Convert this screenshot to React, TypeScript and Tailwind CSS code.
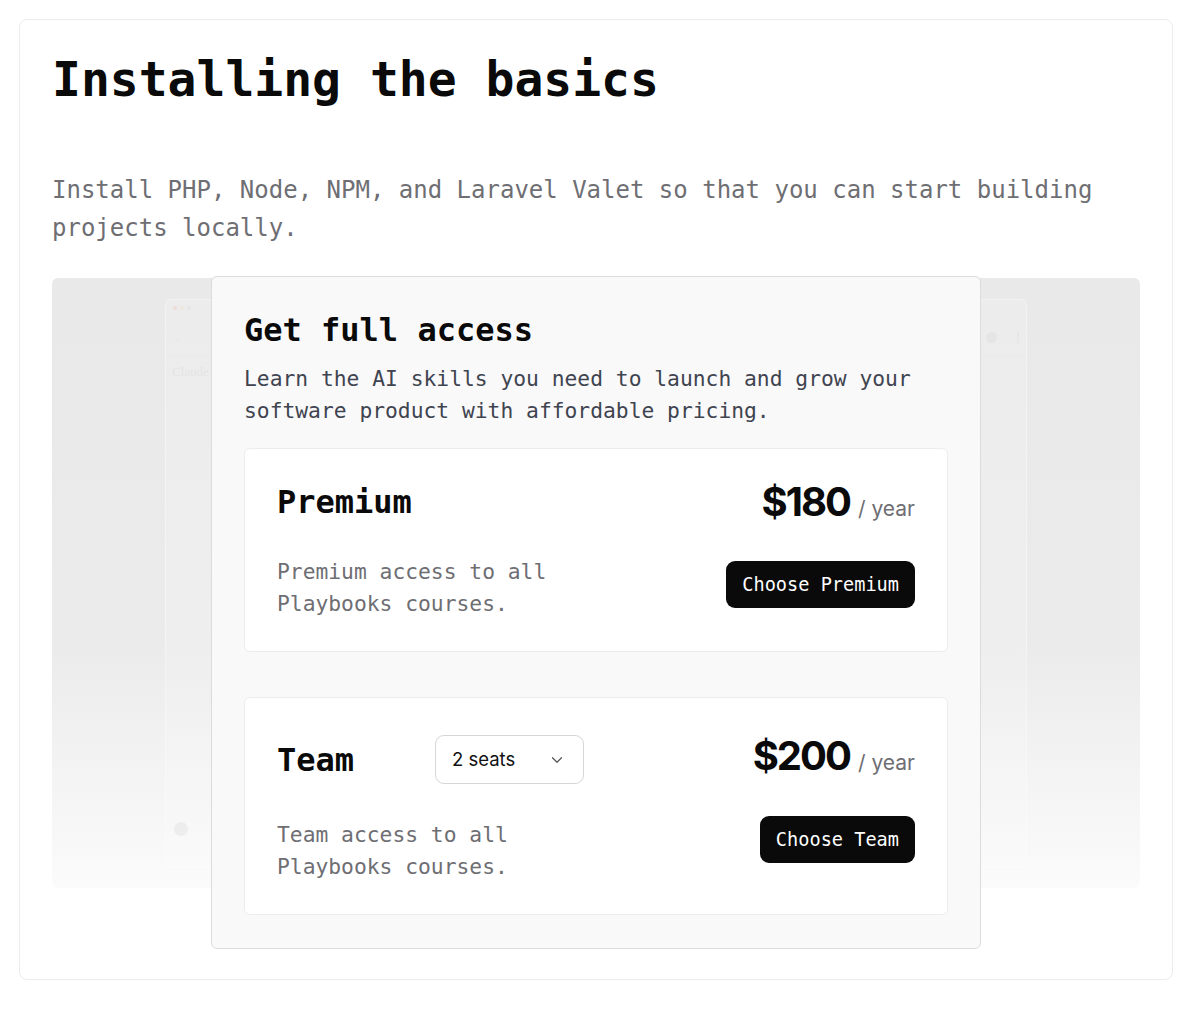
import { ChevronDown } from "lucide-react";

type Plan = {
  name: string;
  price: string;
  blurb: string;
  cta: string;
  seats?: boolean;
};

const mono = "font-['DejaVu_Sans_Mono',monospace]";

function PriceTag({ price, className = "" }: { price: string; className?: string }) {
  return (
    <div className={`flex items-baseline leading-[40px] ${className}`}>
      <span className="font-['Inter',sans-serif] text-[40px] leading-[40px] font-bold tracking-[-0.05em] text-[#0a0a0a]">
        {price}
      </span>
      <span className="ml-2 font-['Inter',sans-serif] text-[21px] leading-none text-[#6e6e73]">/ year</span>
    </div>
  );
}

function PlanCard({ plan }: { plan: Plan }) {
  return (
    <div
      className={`rounded-md border border-[#ededed] bg-white px-[32px] pb-[31px] ${
        plan.seats ? "pt-[37px]" : "pt-[33px]"
      }`}
    >
      <div className="flex items-center">
        <h3
          className={`${mono} text-[32px] leading-[40px] font-bold text-[#0a0a0a] ${plan.seats ? "w-[158px]" : ""}`}
        >
          {plan.name}
        </h3>
        {plan.seats ? (
          <button className="flex h-[49px] w-[149px] items-center justify-between rounded-[9px] border border-[#d6d6d6] bg-white pr-[17px] pl-[16px] font-['Inter',sans-serif] text-[18.5px] text-[#111]">
            2 seats
            <ChevronDown size={18} strokeWidth={1.6} className="text-[#555]" />
          </button>
        ) : null}
        <PriceTag price={plan.price} className={`ml-auto ${plan.seats ? "mb-[8px]" : ""}`} />
      </div>
      <div className={`flex items-start justify-between ${plan.seats ? "mt-[35px]" : "mt-[34px]"}`}>
        <p className={`${mono} max-w-[320px] text-[21.3px] leading-[32px] text-[#6e6e73]`}>{plan.blurb}</p>
        <button
          className={`${mono} h-[47px] rounded-[9px] bg-[#0a0a0a] px-[16px] text-[18.6px] text-white ${
            plan.seats ? "-mt-[3px]" : "mt-[5px]"
          }`}
        >
          {plan.cta}
        </button>
      </div>
    </div>
  );
}

// blurred app screenshot sitting behind the paywall
function ScreenshotBackdrop() {
  return (
    <div className="h-[610px] rounded-md bg-linear-to-b from-[#e9e9e9] via-[#ebebeb] via-60% to-[#fbfbfb] px-[113px] py-[21px]">
      <div className="flex h-full flex-col rounded-md border border-white/50 bg-white/25 opacity-70">
        <div className="flex items-center gap-[3px] px-[7px] pt-[6px]">
          <span className="h-[4px] w-[4px] rounded-full bg-[#f3d6d6]" />
          <span className="h-[4px] w-[4px] rounded-full bg-[#f1e6d4]" />
          <span className="h-[4px] w-[4px] rounded-full bg-[#e3e3e3]" />
        </div>
        <div className="mt-[20px] flex items-center justify-between border-b border-[#ebebeb] px-[7px] pb-[10px]">
          <span className="text-[10px] text-[#e0e0e0]">←</span>
          <div className="flex items-center gap-[20px]">
            <span className="h-[11px] w-[11px] rounded-full bg-[#e4e4e4]" />
            <span className="h-[11px] w-[2px] bg-[#e6e6e6]" />
          </div>
        </div>
        <div className="px-[6px] pt-[6px] font-['Liberation_Serif',serif] text-[13px] text-[#e2e2e2]">Claude</div>
        <div className="flex-1" />
        <div className="px-[8px] pb-[30px]">
          <span className="block h-[14px] w-[14px] rounded-full bg-[#eaeaea]" />
        </div>
      </div>
    </div>
  );
}

export default function App() {
  const plans: Plan[] = [
    {
      name: "Premium",
      price: "$180",
      blurb: "Premium access to all Playbooks courses.",
      cta: "Choose Premium",
    },
    {
      name: "Team",
      price: "$200",
      blurb: "Team access to all Playbooks courses.",
      cta: "Choose Team",
      seats: true,
    },
  ];

  return (
    <div className="min-h-[1035px] bg-white pt-[19px]">
      <div className="ml-[19px] w-[1154px] rounded-lg border border-[#ececec] bg-white px-[32px] pt-[35px] pb-[91px]">
        <h1 className={`${mono} text-[48px] leading-[48px] font-bold text-[#0a0a0a]`}>Installing the basics</h1>
        <p className={`${mono} mt-[68px] text-[24px] leading-[38px] text-[#6e6e73]`}>
          Install PHP, Node, NPM, and Laravel Valet so that you can start building projects locally.
        </p>

        <div className="relative mt-[31px]">
          <ScreenshotBackdrop />

          <div className="absolute top-[-2px] left-1/2 w-[770px] -translate-x-1/2 rounded-md border border-[#dcdcdc] bg-[#f9f9f9] px-[32px] pt-[33px] pb-[33px]">
            <h2 className={`${mono} text-[32px] leading-[40px] font-bold text-[#0a0a0a]`}>Get full access</h2>
            <p className={`${mono} mt-[13px] text-[21.3px] leading-[32px] text-[#3f4450]`}>
              Learn the AI skills you need to launch and grow your software product with affordable pricing.
            </p>
            <div className="mt-[21px] flex flex-col gap-[45px]">
              {plans.map((plan) => (
                <PlanCard key={plan.name} plan={plan} />
              ))}
            </div>
          </div>
        </div>
      </div>
    </div>
  );
}
